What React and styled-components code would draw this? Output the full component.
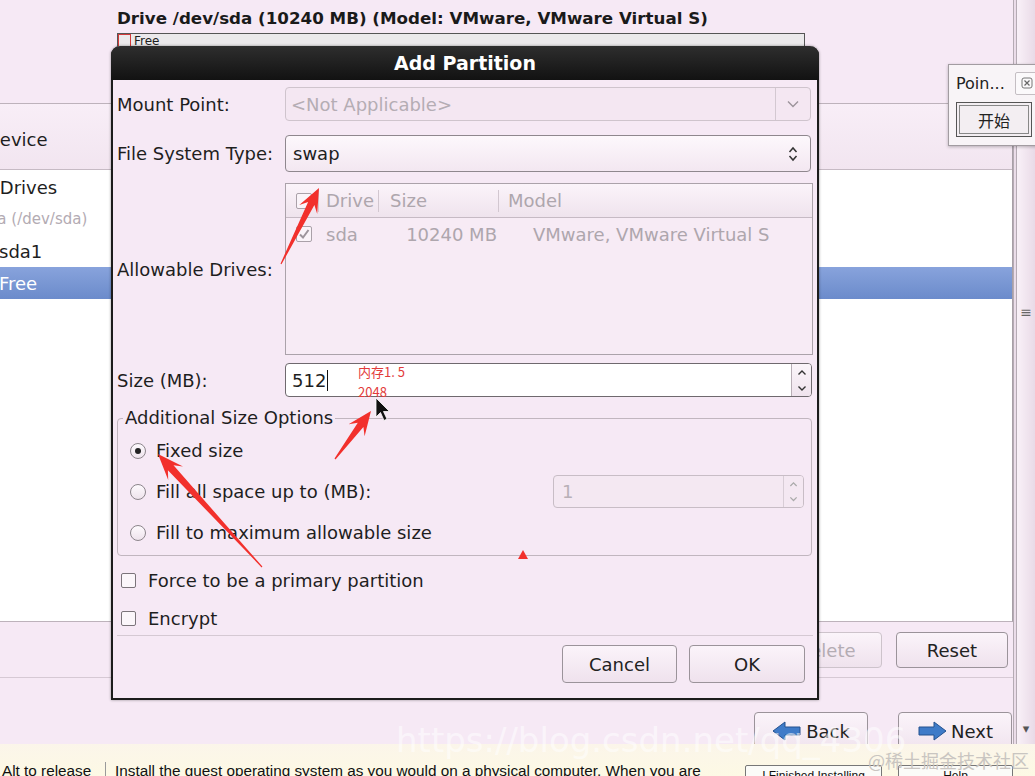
import React from "react";
import styled, { createGlobalStyle } from "styled-components";

const GlobalStyle = createGlobalStyle`
  html, body { margin: 0; padding: 0; }
  body {
    font-family: "DejaVu Sans", "Noto Sans CJK SC", sans-serif;
    background: #f6e9f5;
    color: #1e1e1e;
  }
  * { box-sizing: border-box; }
`;

function arrowPoints(tail, tip, head = 24, wing = 10, shaft = 3.5)
{
    const [x1, y1] = tail;
    const [x2, y2] = tip;
    const dx = x2 - x1, dy = y2 - y1;
    const len = Math.hypot(dx, dy);
    const ux = dx / len, uy = dy / len;
    const px = -uy, py = ux;
    const jx = x2 - ux * head * 0.72, jy = y2 - uy * head * 0.72;
    const wx = x2 - ux * head, wy = y2 - uy * head;
    const pts = [
        [x1 + px * 0.6, y1 + py * 0.6],
        [jx + px * shaft, jy + py * shaft],
        [wx + px * wing, wy + py * wing],
        [x2, y2],
        [wx - px * wing, wy - py * wing],
        [jx - px * shaft, jy - py * shaft],
        [x1 - px * 0.6, y1 - py * 0.6],
    ];
    return pts.map(p => p[0].toFixed(1) + "," + p[1].toFixed(1)).join(" ");
}

const ChevronDown = ({ color = "#9c949b" }) => (
    <svg width="12" height="8" viewBox="0 0 12 8"><polyline points="1,1.5 6,6.5 11,1.5" fill="none" stroke={color} strokeWidth="1.4"/></svg>
);

const ChevronUpDown = ({ color = "#333" }) => (
    <svg width="10" height="16" viewBox="0 0 10 16">
        <polyline points="1.5,6 5,2 8.5,6" fill="none" stroke={color} strokeWidth="1.5"/>
        <polyline points="1.5,10 5,14 8.5,10" fill="none" stroke={color} strokeWidth="1.5"/>
    </svg>
);

const SpinArrow = ({ up, color = "#333", size = 10 }) => (
    <svg width={size} height={size * 0.7} viewBox="0 0 10 7">
        <polyline points={up ? "1.5,5.5 5,2 8.5,5.5" : "1.5,1.5 5,5 8.5,1.5"} fill="none" stroke={color} strokeWidth="1.4"/>
    </svg>
);

const CheckMark = ({ color }) => (
    <svg width="12" height="12" viewBox="0 0 12 12"><polyline points="2,6.5 5,9.5 10.5,2" fill="none" stroke={color} strokeWidth="2"/></svg>
);

function App()
{
    return (
        <Screen>
            <GlobalStyle/>
            <Installer>
                <MainColumn>
                    <DriveHeader>
                        <DriveTitle>Drive /dev/sda (10240 MB) (Model: VMware, VMware Virtual S)</DriveTitle>
                        <DriveBar>
                            <FreeMarker/>
                            <DriveBarLabel>Free</DriveBarLabel>
                        </DriveBar>
                    </DriveHeader>
                    <TreeTable>
                        <TreeHead>Device</TreeHead>
                        <TreeBody>
                            <TreeRow indent={3}>Hard Drives</TreeRow>
                            <TreeRow indent={32} dim>sda (/dev/sda)</TreeRow>
                            <TreeRow indent={51}>sda1</TreeRow>
                            <TreeRow indent={51} selected>Free</TreeRow>
                        </TreeBody>
                    </TreeTable>
                    <ActionRow>
                        <WinButton width={112}>Create</WinButton>
                        <WinButton width={112}>Edit</WinButton>
                        <WinButton width={112} disabled>Delete</WinButton>
                        <WinButton width={112}>Reset</WinButton>
                    </ActionRow>
                    <Divider/>
                    <NavRow>
                        <NavButton>
                            <svg width="30" height="22" viewBox="0 0 30 22">
                                <path d="M1 11 L13 2 L13 7 L28 7 L28 15 L13 15 L13 20 Z" fill="#3f7bc8" stroke="#24528f" strokeWidth="1"/>
                            </svg>
                            Back
                        </NavButton>
                        <NavButton>
                            <svg width="30" height="22" viewBox="0 0 30 22">
                                <path d="M29 11 L17 2 L17 7 L2 7 L2 15 L17 15 L17 20 Z" fill="#3f7bc8" stroke="#24528f" strokeWidth="1"/>
                            </svg>
                            Next
                        </NavButton>
                    </NavRow>
                </MainColumn>
                <ScrollStrip>
                    <Grip>≡</Grip>
                    <DropCaret>▾</DropCaret>
                </ScrollStrip>
            </Installer>

            <StatusBar>
                <StatusHint>Alt to release</StatusHint>
                <StatusMessage>Install the guest operating system as you would on a physical computer. When you are</StatusMessage>
                <StatusButtons>
                    <StatusButton width={137}>I Finished Installing</StatusButton>
                    <StatusButton width={115}>Help</StatusButton>
                </StatusButtons>
            </StatusBar>

            <Dialog>
                <TitleBar>Add Partition</TitleBar>
                <DialogBody>
                    <FormRow height={34}>
                        <FieldLabel>Mount Point:</FieldLabel>
                        <Combo disabled>
                            <ComboText disabled>&lt;Not Applicable&gt;</ComboText>
                            <ComboButton divided><ChevronDown/></ComboButton>
                        </Combo>
                    </FormRow>

                    <FormRow height={37} gap={14}>
                        <FieldLabel>File System Type:</FieldLabel>
                        <Combo>
                            <ComboText>swap</ComboText>
                            <ComboButton><ChevronUpDown/></ComboButton>
                        </Combo>
                    </FormRow>

                    <FormRow height={172} gap={11}>
                        <FieldLabel>Allowable Drives:</FieldLabel>
                        <DriveList>
                            <DriveGridRow header>
                                <DriveCell><SmallCheck/></DriveCell>
                                <DriveCell divider pad={7}>Drive</DriveCell>
                                <DriveCell divider pad={11}>Size</DriveCell>
                                <DriveCell divider pad={9}>Model</DriveCell>
                            </DriveGridRow>
                            <DriveGridRow>
                                <DriveCell><SmallCheck><CheckMark color="#9d959c"/></SmallCheck></DriveCell>
                                <DriveCell pad={8}>sda</DriveCell>
                                <DriveCell align="right">10240 MB</DriveCell>
                                <DriveCell pad={35}>VMware, VMware Virtual S</DriveCell>
                            </DriveGridRow>
                        </DriveList>
                    </FormRow>

                    <FormRow height={34} gap={8}>
                        <FieldLabel>Size (MB):</FieldLabel>
                        <SpinBox>
                            <SpinText>512<Caret/></SpinText>
                            <SpinButtons>
                                <SpinHalf><SpinArrow up/></SpinHalf>
                                <SpinHalf><SpinArrow/></SpinHalf>
                            </SpinButtons>
                        </SpinBox>
                    </FormRow>

                    <SizeFrame>
                        <legend>Additional Size Options</legend>
                        <RadioRow>
                            <Radio checked/>
                            <OptionText>Fixed size</OptionText>
                        </RadioRow>
                        <RadioRow>
                            <Radio/>
                            <OptionText>Fill all space up to (MB):</OptionText>
                            <SmallSpin>
                                <SpinText disabled>1</SpinText>
                                <SpinButtons disabled>
                                    <SpinHalf><SpinArrow up color="#aaa" size={9}/></SpinHalf>
                                    <SpinHalf><SpinArrow color="#aaa" size={9}/></SpinHalf>
                                </SpinButtons>
                            </SmallSpin>
                        </RadioRow>
                        <RadioRow>
                            <Radio/>
                            <OptionText>Fill to maximum allowable size</OptionText>
                        </RadioRow>
                    </SizeFrame>

                    <CheckList>
                        <CheckRow><Box/><OptionText>Force to be a primary partition</OptionText></CheckRow>
                        <CheckRow><Box/><OptionText>Encrypt</OptionText></CheckRow>
                    </CheckList>

                    <DialogFooter>
                        <WinButton width={115} height={38}>Cancel</WinButton>
                        <WinButton width={116} height={38}>OK</WinButton>
                    </DialogFooter>
                </DialogBody>
            </Dialog>

            <PointerPopup>
                <PopupHead>
                    <PopupTitle>Poin...</PopupTitle>
                    <PopupClose>
                        <svg width="12" height="12" viewBox="0 0 12 12">
                            <rect x="1" y="1" width="10" height="10" rx="2" fill="none" stroke="#777" strokeWidth="1"/>
                            <path d="M3.5 3.5 L8.5 8.5 M8.5 3.5 L3.5 8.5" stroke="#666" strokeWidth="1.2"/>
                        </svg>
                    </PopupClose>
                </PopupHead>
                <StartButton>开始</StartButton>
            </PointerPopup>

            <NoteText>内存1. 5<br/>2048</NoteText>
            <UrlMark>https://blog.csdn.net/qq_4306</UrlMark>
            <SiteMark>@稀土掘金技术社区</SiteMark>

            <Overlay width="1035" height="776" viewBox="0 0 1035 776">
                <polygon points={arrowPoints([281, 264], [319, 188])} fill="#f2302c"/>
                <polygon points={arrowPoints([335, 459], [371, 411])} fill="#f2302c"/>
                <polygon points={arrowPoints([262, 567], [158, 454], 26, 10, 3.8)} fill="#f2302c"/>
                <polygon points="523,550 528,559 518,559" fill="#f2302c"/>
                <path d="M376 398 L376 417 L380.5 412.5 L384 420.5 L387 419 L383.5 411.5 L389.5 411.5 Z" fill="#111" stroke="#fff" strokeWidth="0.8"/>
            </Overlay>
        </Screen>
    );
}

export default App;

const Screen = styled.div`
    position: relative;
    width: 1035px;
    height: 776px;
    overflow: hidden;
    display: flex;
    flex-flow: column nowrap;
    background: #f6e9f5;
`
const Installer = styled.div`
    display: flex;
    flex-flow: row nowrap;
    flex: none;
    height: 744px;
    overflow: hidden;
`
const MainColumn = styled.div`
    display: flex;
    flex-flow: column nowrap;
    width: 1013px;
    overflow: hidden;

    & > * { flex: none; }
`
const DriveHeader = styled.div`
    padding: 8px 0 0 117px;
`
const DriveTitle = styled.div`
    font-size: 16.7px;
    font-weight: bold;
    line-height: 20px;
    white-space: nowrap;
    color: #1a1a1a;
`
const DriveBar = styled.div`
    display: flex;
    align-items: flex-start;
    margin-top: 5px;
    width: 688px;
    height: 17px;
    border: 1px solid #555;
    border-bottom: none;
    background: #ebe9eb;
`
const FreeMarker = styled.div`
    width: 13px;
    height: 100%;
    border: 1px solid #d23a3a;
`
const DriveBarLabel = styled.span`
    font-size: 12px;
    line-height: 14px;
    padding-left: 3px;
`
const TreeTable = styled.div`
    display: flex;
    flex-flow: column nowrap;
    margin: 53px 0 0 -52px;
    width: calc(100% + 52px);
    height: 519px;
    border-top: 1px solid #bdb2bb;
    border-bottom: 1px solid #bdb2bb;
    border-right: 1px solid #a89fa7;
`
const TreeHead = styled.div`
    display: flex;
    align-items: center;
    height: 66px;
    padding: 6px 0 0 38px;
    font-size: 18px;
    background: linear-gradient(#f8eef7, #f2e5f0);
    border-bottom: 1px solid #c6bac4;
`
const TreeBody = styled.div`
    flex: 1;
    padding-top: 1px;
    background: #fff;
`
const TreeRow = styled.div`
    display: flex;
    align-items: center;
    height: 32px;
    padding-left: ${p => p.indent}px;
    font-size: ${p => p.dim ? "15px" : "18px"};
    color: ${p => p.selected ? "#fff" : p.dim ? "#b3abb3" : "#1e1e1e"};
    background: ${p => p.selected ? "linear-gradient(#88a3dc, #6b8bcb)" : "transparent"};
`
const ActionRow = styled.div`
    display: flex;
    justify-content: flex-end;
    gap: 14px;
    margin-top: 10px;
    padding-right: 5px;
`
const WinButton = styled.div`
    display: flex;
    align-items: center;
    justify-content: center;
    width: ${p => p.width}px;
    height: ${p => p.height || 36}px;
    border: 1px solid ${p => p.disabled ? "#cdc3cb" : "#9b939a"};
    border-radius: 4px;
    background: linear-gradient(#fbf4fa, #efe2ed);
    font-size: 18px;
    color: ${p => p.disabled ? "#b4acb3" : "#222"};
`
const Divider = styled.div`
    height: 1px;
    margin-top: 9px;
    background: #d6c9d4;
`
const NavRow = styled.div`
    display: flex;
    justify-content: flex-end;
    gap: 30px;
    margin-top: 34px;
    padding-right: 1px;
`
const NavButton = styled.div`
    display: flex;
    align-items: center;
    justify-content: center;
    gap: 4px;
    width: 114px;
    height: 42px;
    padding-bottom: 4px;
    border: 1px solid #9b939a;
    border-radius: 4px;
    background: linear-gradient(#fbf4fa, #efe2ed);
    font-size: 18px;
    color: #222;
`
const ScrollStrip = styled.div`
    display: flex;
    flex-flow: column nowrap;
    align-items: center;
    width: 22px;
    border-left: 4px double #b5abb4;
    background: linear-gradient(90deg, #f9f1f8, #e9dae7);
`
const Grip = styled.span`
    margin-top: 304px;
    font-size: 14px;
    color: #666;
`
const DropCaret = styled.span`
    margin-top: auto;
    margin-bottom: 8px;
    font-size: 13px;
    color: #555;
`
const StatusBar = styled.div`
    display: flex;
    align-items: flex-start;
    flex: 1;
    overflow: hidden;
    padding-top: 18px;
    background: linear-gradient(#fbf5ea, #fdf9e4);
    font-family: "Liberation Sans", sans-serif;
    font-size: 15.3px;
    color: #111;
    white-space: nowrap;
`
const StatusHint = styled.div`
    width: 106px;
    height: 100%;
    padding-left: 2px;
    border-right: 1px solid #9a9a9a;
`
const StatusMessage = styled.div`
    width: 639px;
    padding-left: 9px;
    overflow: hidden;
`
const StatusButtons = styled.div`
    display: flex;
    gap: 16px;
    margin-top: 3px;
`
const StatusButton = styled.div`
    width: ${p => p.width}px;
    height: 24px;
    padding-top: 3px;
    border: 1px solid #777;
    border-radius: 2px;
    background: #fbfbf8;
    font-size: 12px;
    text-align: center;
    overflow: hidden;
`
const Dialog = styled.div`
    position: absolute;
    left: 111px;
    top: 46px;
    width: 708px;
    height: 654px;
    display: flex;
    flex-flow: column nowrap;
    border: 2px solid #1c1c1c;
    border-top: none;
    border-radius: 9px 9px 0 0;
    background: #f6e9f5;
    box-shadow: 0 0 3px rgba(0, 0, 0, 0.4);
`
const TitleBar = styled.div`
    height: 34px;
    flex: none;
    display: flex;
    align-items: center;
    justify-content: center;
    margin: 0 -2px;
    border-radius: 9px 9px 0 0;
    background: linear-gradient(#2e2e2e, #121212);
    color: #fff;
    font-size: 19px;
    font-weight: bold;
`
const DialogBody = styled.div`
    display: flex;
    flex-flow: column nowrap;
    padding: 7px 6px 0 4px;

    & > * { flex: none; }
`
const FormRow = styled.div`
    display: flex;
    align-items: center;
    height: ${p => p.height}px;
    margin-top: ${p => p.gap || 0}px;
`
const FieldLabel = styled.span`
    width: 168px;
    flex: none;
    font-size: 18px;
    color: #1e1e1e;
    white-space: nowrap;
`
const Combo = styled.div`
    display: flex;
    align-items: center;
    flex: 1;
    height: 100%;
    border: 1px solid ${p => p.disabled ? "#cfc4cd" : "#8f878e"};
    border-radius: 4px;
    background: ${p => p.disabled ? "#f4e7f2" : "linear-gradient(#fdf8fc, #f3e7f1)"};
`
const ComboText = styled.span`
    flex: 1;
    padding-left: ${p => p.disabled ? 5 : 7}px;
    font-size: 18px;
    color: ${p => p.disabled ? "#b5adb4" : "#1e1e1e"};
`
const ComboButton = styled.div`
    display: flex;
    align-items: center;
    justify-content: center;
    width: 35px;
    height: 100%;
    border-left: ${p => p.divided ? "1px solid #d3c8d1" : "none"};
`
const DriveList = styled.div`
    flex: 1;
    height: 100%;
    margin-right: -2px;
    border: 1px solid #aba2aa;
    background: #f7ebf5;
`
const DriveGridRow = styled.div`
    display: grid;
    grid-template-columns: 32px 60px 120px 1fr;
    align-items: center;
    height: ${p => p.header ? 34 : 32}px;
    ${p => p.header && `
        background: linear-gradient(#fbf4fa, #efe3ed);
        border-bottom: 1px solid #c6bac4;
    `}
`
const DriveCell = styled.div`
    display: flex;
    align-items: center;
    justify-content: ${p => p.align === "right" ? "flex-end" : "flex-start"};
    height: 22px;
    padding-left: ${p => p.pad || 0}px;
    padding-right: ${p => p.align === "right" ? 1 : 0}px;
    border-left: ${p => p.divider ? "1px solid #d2c7d0" : "none"};
    font-size: 18px;
    color: #aea6ad;
    white-space: nowrap;

    &:first-child { padding-left: 10px; }
`
const SmallCheck = styled.div`
    display: flex;
    align-items: center;
    justify-content: center;
    width: 16px;
    height: 16px;
    border: 1px solid #aaa1a9;
    border-radius: 2px;
    background: #faf4f9;
`
const SpinBox = styled.div`
    display: flex;
    flex: 1;
    height: 100%;
    margin-right: -1px;
    border: 1px solid #6f696e;
    border-radius: 4px;
    background: #fff;
    overflow: hidden;
`
const SpinText = styled.div`
    display: flex;
    align-items: center;
    flex: 1;
    padding-left: ${p => p.disabled ? 8 : 6}px;
    font-size: 18px;
    color: ${p => p.disabled ? "#b8b0b7" : "#1e1e1e"};
`
const Caret = styled.span`
    display: inline-block;
    width: 1px;
    height: 21px;
    margin-left: 1px;
    background: #111;
`
const SpinButtons = styled.div`
    display: flex;
    flex-flow: column nowrap;
    width: 20px;
    border-left: 1px solid ${p => p.disabled ? "#d8cdd6" : "#b8aeb6"};
    background: ${p => p.disabled ? "#f4e8f2" : "linear-gradient(#fbf5fa, #efe3ed)"};
`
const SpinHalf = styled.div`
    flex: 1;
    display: flex;
    align-items: center;
    justify-content: center;
`
const SizeFrame = styled.fieldset`
    margin: 10px 0 0 0;
    padding: 1px 7px 2px 12px;
    width: 695px;
    border: 1px solid #c1b6bf;
    border-radius: 4px;

    legend {
        margin-left: -7px;
        padding: 0 2px;
        font-size: 18px;
        line-height: 22px;
        color: #1e1e1e;
    }
`
const RadioRow = styled.div`
    display: flex;
    align-items: center;
    gap: 10px;
    height: 41px;
`
const Radio = styled.span`
    position: relative;
    width: 16px;
    height: 16px;
    flex: none;
    border: 1px solid #8c858b;
    border-radius: 50%;
    background: linear-gradient(#fdfafd, #eee3ec);

    &::after {
        content: "";
        display: ${p => p.checked ? "block" : "none"};
        position: absolute;
        left: 4px;
        top: 4px;
        width: 6px;
        height: 6px;
        border-radius: 50%;
        background: #222;
    }
`
const OptionText = styled.span`
    font-size: 18px;
    color: #1e1e1e;
    white-space: nowrap;
`
const SmallSpin = styled.div`
    display: flex;
    width: 251px;
    height: 33px;
    margin-left: auto;
    border: 1px solid #c8bdc6;
    border-radius: 4px;
    background: #f4e8f2;
    overflow: hidden;
`
const CheckList = styled.div`
    display: flex;
    flex-flow: column nowrap;
    gap: 2px;
    margin-top: 6px;
`
const CheckRow = styled.div`
    display: flex;
    align-items: center;
    gap: 12px;
    height: 36px;
    padding-left: 4px;
`
const Box = styled.span`
    width: 15px;
    height: 15px;
    border: 1px solid #7b747a;
    border-radius: 2px;
    background: #fbf6fa;
`
const DialogFooter = styled.div`
    display: flex;
    justify-content: flex-end;
    gap: 12px;
    width: 696px;
    margin-top: -1px;
    padding: 9px 8px 0 0;
    border-top: 1px solid #d5c9d3;
`
const PointerPopup = styled.div`
    position: absolute;
    left: 948px;
    top: 64px;
    width: 92px;
    height: 82px;
    padding: 6px 0 0 7px;
    border: 1px solid #a29ca1;
    background: #f8f4f7;
    box-shadow: 0 1px 3px rgba(0, 0, 0, 0.25);
`
const PopupHead = styled.div`
    display: flex;
    align-items: center;
    justify-content: space-between;
    height: 24px;
`
const PopupTitle = styled.span`
    font-size: 16px;
    color: #222;
`
const PopupClose = styled.div`
    display: flex;
    align-items: center;
    justify-content: center;
    width: 23px;
    height: 23px;
    margin-right: 1px;
    border: 1px solid #c4bec3;
    border-radius: 2px;
    background: #fbf9fb;
`
const StartButton = styled.div`
    display: flex;
    align-items: center;
    justify-content: center;
    width: 76px;
    height: 35px;
    margin-top: 7px;
    border: 1px solid #555;
    outline: 1px solid #888;
    outline-offset: -4px;
    background: #f3eef2;
    font-family: "Noto Sans CJK SC", sans-serif;
    font-size: 16px;
    color: #222;
`
const NoteText = styled.div`
    position: absolute;
    left: 358px;
    top: 362px;
    font-family: "Noto Sans CJK SC", sans-serif;
    font-size: 13px;
    line-height: 20px;
    color: #e23b3b;
`
const UrlMark = styled.div`
    position: absolute;
    left: 396px;
    top: 720px;
    font-family: "DejaVu Sans", sans-serif;
    font-size: 34px;
    color: rgba(255, 255, 255, 0.55);
    white-space: nowrap;
`
const SiteMark = styled.div`
    position: absolute;
    left: 868px;
    top: 747px;
    font-family: "Noto Sans CJK SC", sans-serif;
    font-size: 18px;
    color: #c9c5c1;
    white-space: nowrap;
`
const Overlay = styled.svg`
    position: absolute;
    left: 0;
    top: 0;
    pointer-events: none;
`
